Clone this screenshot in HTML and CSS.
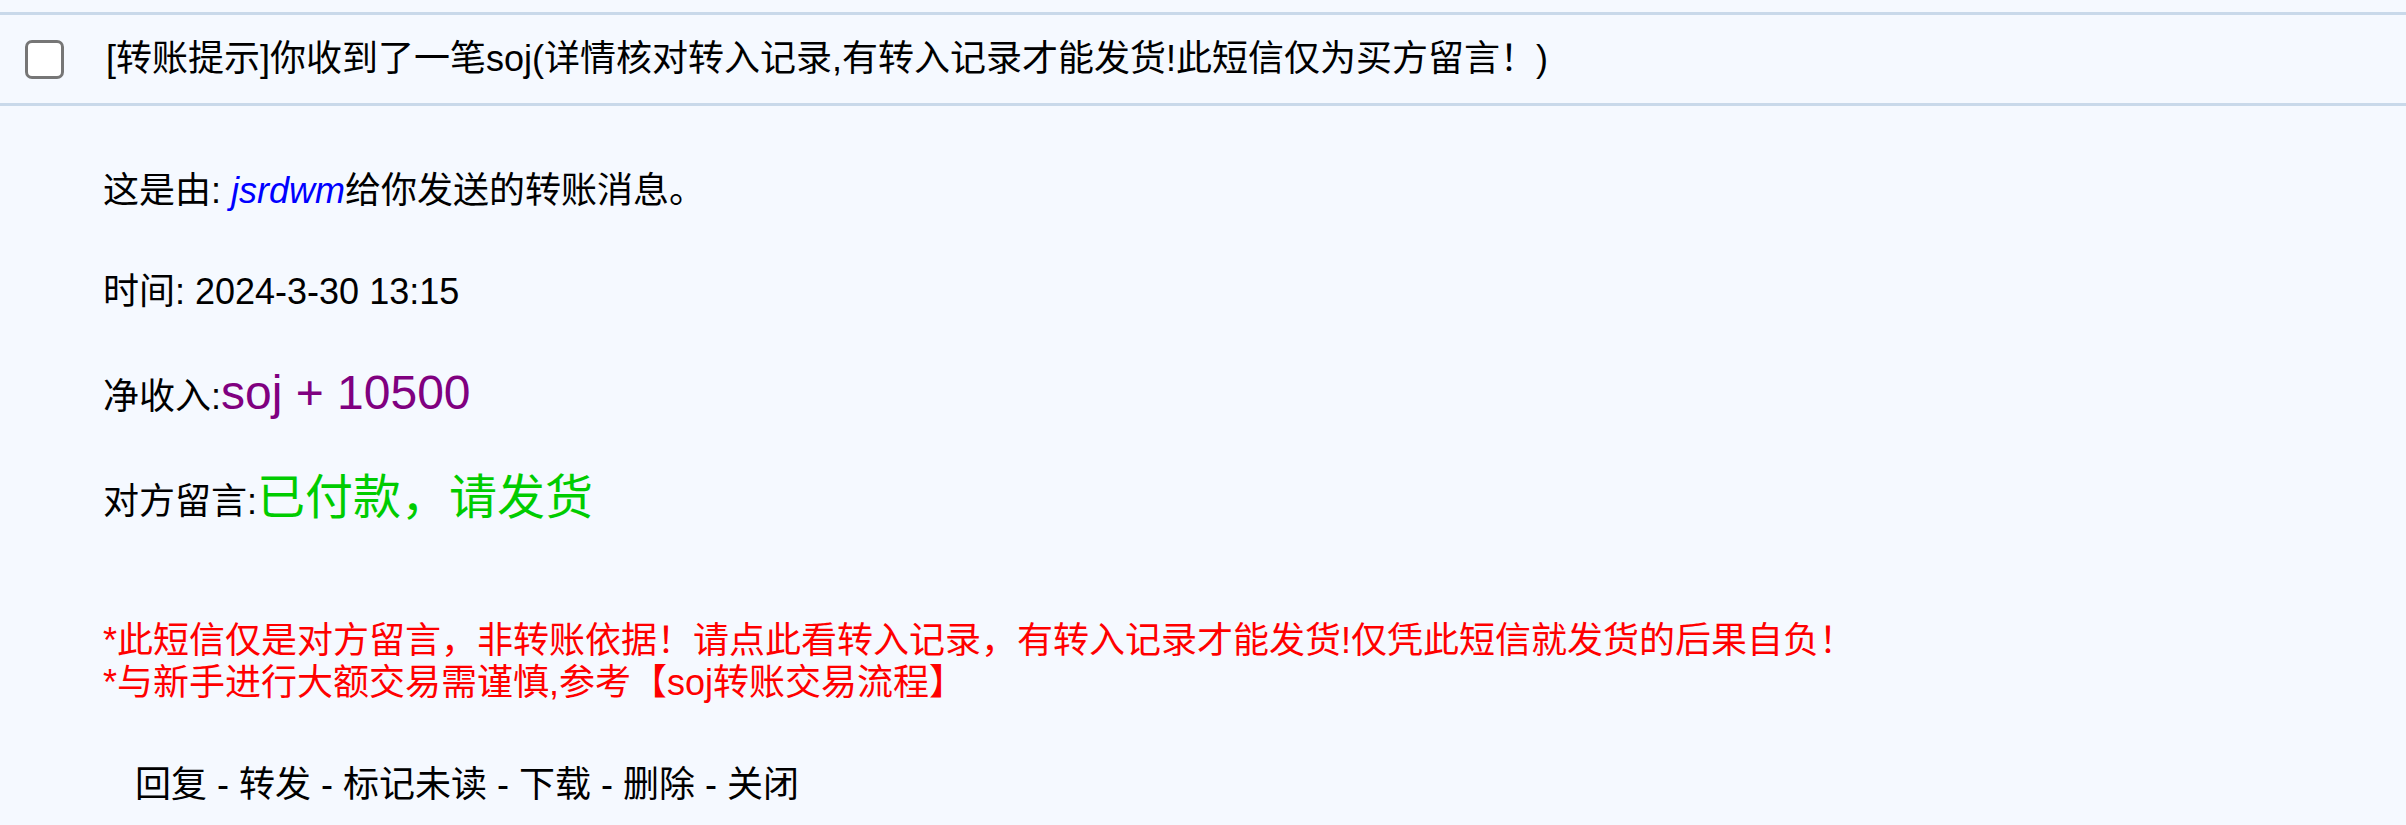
FILE: index.html
```html
<!DOCTYPE html>
<html lang="zh-CN">
<head>
<meta charset="utf-8">
<title>转账提示</title>
<link rel="stylesheet" href="styles.css">
</head>
<body>
<div class="msg">
  <div class="msg-head">
    <span class="check"></span>
    <span class="subject">[转账提示]你收到了一笔soj(详情核对转入记录,有转入记录才能发货!此短信仅为买方留言！)</span>
  </div>
  <div class="msg-body">
    <p class="row">这是由: <span class="sender">jsrdwm</span>给你发送的转账消息。</p>
    <p class="row">时间: 2024-3-30 13:15</p>
    <p class="row">净收入:<span class="amount">soj + 10500</span></p>
    <p class="row">对方留言:<span class="note">已付款，请发货</span></p>
    <p class="warn">*此短信仅是对方留言，非转账依据！请点此看转入记录，有转入记录才能发货!仅凭此短信就发货的后果自负！<br>*与新手进行大额交易需谨慎,参考【soj转账交易流程】</p>
    <p class="actions">回复 - 转发 - 标记未读 - 下载 - 删除 - 关闭</p>
  </div>
</div>
</body>
</html>
```
FILE: styles.css
```css
html, body {
  margin: 0;
  padding: 0;
  background: #f5f9ff;
}
body {
  font-family: "Liberation Sans", "Noto Sans CJK SC", sans-serif;
  color: #000;
  font-size: 36px;
}
.msg {
  padding-top: 12px;
}
.msg-head {
  display: flex;
  align-items: center;
  height: 88px;
  border-top: 3px solid #c9d9ea;
  border-bottom: 3px solid #c9d9ea;
  padding-left: 25px;
  gap: 42px;
}
.check {
  box-sizing: border-box;
  width: 39px;
  height: 39px;
  border: 3px solid #767676;
  border-radius: 7px;
  background: #fff;
  flex: none;
}
.subject {
  font-size: 36px;
  line-height: 44px;
  color: #000;
}
.msg-body {
  padding: 16px 0 0 103px;
}
.row {
  margin: 36px 0;
  line-height: 65px;
}
.sender {
  color: #0000ff;
  font-style: italic;
}
.amount {
  color: #800080;
  font-size: 48px;
}
.note {
  color: #00cc00;
  font-size: 48px;
}
.warn {
  margin: 86px 0 0;
  color: #ff0000;
  line-height: 42px;
}
.actions {
  margin: 48px 0 0;
  padding-left: 32px;
  line-height: 65px;
  font-size: 36px;
}
```
